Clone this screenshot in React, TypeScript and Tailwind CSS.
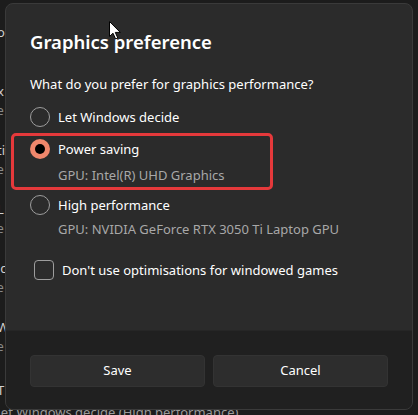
const font = { fontFamily: '"Segoe UI", "Noto Sans", "Open Sans", sans-serif' };

function Radio({ checked }: { checked?: boolean }) {
  if (checked) {
    return (
      <span className="flex h-5 w-5 shrink-0 items-center justify-center rounded-full bg-[#f0876c]">
        <span className="h-[10px] w-[10px] rounded-full bg-black" />
      </span>
    );
  }
  return <span className="h-5 w-5 shrink-0 rounded-full border border-[#9d9d9d]" />;
}

function Option({ label, checked }: { label: string; checked?: boolean }) {
  return (
    <div className="flex h-5 items-center gap-2">
      <Radio checked={checked} />
      <span className="text-[13px] leading-5 text-white">{label}</span>
    </div>
  );
}

function Cursor() {
  return (
    <svg className="absolute left-[109px] top-[21px]" width="13" height="19" viewBox="0 0 13 19">
      <path
        d="M0.5 0.5 L0.5 15.5 L4 12.2 L6.6 18 L8.8 17 L6.3 11.4 L11.3 11.4 Z"
        fill="white"
        stroke="black"
        strokeWidth="1"
        strokeLinejoin="round"
      />
    </svg>
  );
}

export default function App() {
  const backdrop = [
    ['o', 'i'],
    ['x', 'e'],
    ['ti', 'e'],
    ['L', 'e'],
    ['ic', 'e'],
    ['Wi', 'e'],
  ];

  return (
    <div className="relative h-[415px] w-[418px] overflow-hidden bg-[#1c1c1c]" style={font}>
      {/* settings page behind the dialog */}
      <div className="flex flex-col pt-[22px] text-[13px] leading-5">
        {backdrop.map(([a, b], i) => (
          <div key={i} className="flex h-[59px] flex-col">
            <span className="-ml-[3px] text-[#cfcfcf]">{a}</span>
            <span className="-ml-[3px] text-[12px] text-[#8a8a8a]">{b}</span>
          </div>
        ))}
        <span className="-ml-[3px] mt-[4px] text-[#cfcfcf]">T</span>
        <span className="-ml-[6px] mt-[2px] text-[#9a9a9a]">Let Windows decide (High performance)</span>
      </div>

      {/* dialog */}
      <div className="absolute left-[5px] top-[3px] flex h-[407px] w-[408px] flex-col overflow-hidden rounded-[8px] border border-[#3a3a3a] bg-[#2b2b2b]">
        <div className="relative flex h-[326px] flex-col px-6 pt-[24px]">
          <h1 className="h-7 text-[18.5px] font-semibold leading-7 text-white">Graphics preference</h1>
          <p className="mt-[18px] text-[13px] leading-5 text-white">What do you prefer for graphics performance?</p>

          <div className="mt-[13px] flex flex-col">
            <Option label="Let Windows decide" />
            <div className="mt-3">
              <Option label="Power saving" checked />
            </div>
            <p className="mt-[6px] pl-7 text-[13px] leading-5 text-[#a8a8a8]">GPU: Intel(R) UHD Graphics</p>
            <div className="mt-[10px]">
              <Option label="High performance" />
            </div>
            <p className="mt-1 pl-7 text-[13px] leading-5 text-[#a8a8a8]">GPU: NVIDIA GeForce RTX 3050 Ti Laptop GPU</p>
          </div>

          <div className="mt-[21px] flex h-5 items-center gap-2 pl-1">
            <span className="h-5 w-5 shrink-0 rounded-[4px] border border-[#9d9d9d]" />
            <span className="text-[13px] leading-5 text-white">Don't use optimisations for windowed games</span>
          </div>

          {/* annotation box */}
          <div className="absolute left-[5px] top-[129px] h-[57px] w-[262px] rounded-[5px] border-[3px] border-[#e5393b]" />
        </div>

        <div className="flex flex-1 gap-2 border-t border-[#262626] bg-[#202020] px-6 pt-[24px]">
          <button className="h-8 flex-1 rounded-[4px] border border-[#333333] bg-[#2d2d2d] text-[13px] text-white">Save</button>
          <button className="h-8 flex-1 rounded-[4px] border border-[#333333] bg-[#2d2d2d] text-[13px] text-white">Cancel</button>
        </div>
      </div>

      <Cursor />
    </div>
  );
}
